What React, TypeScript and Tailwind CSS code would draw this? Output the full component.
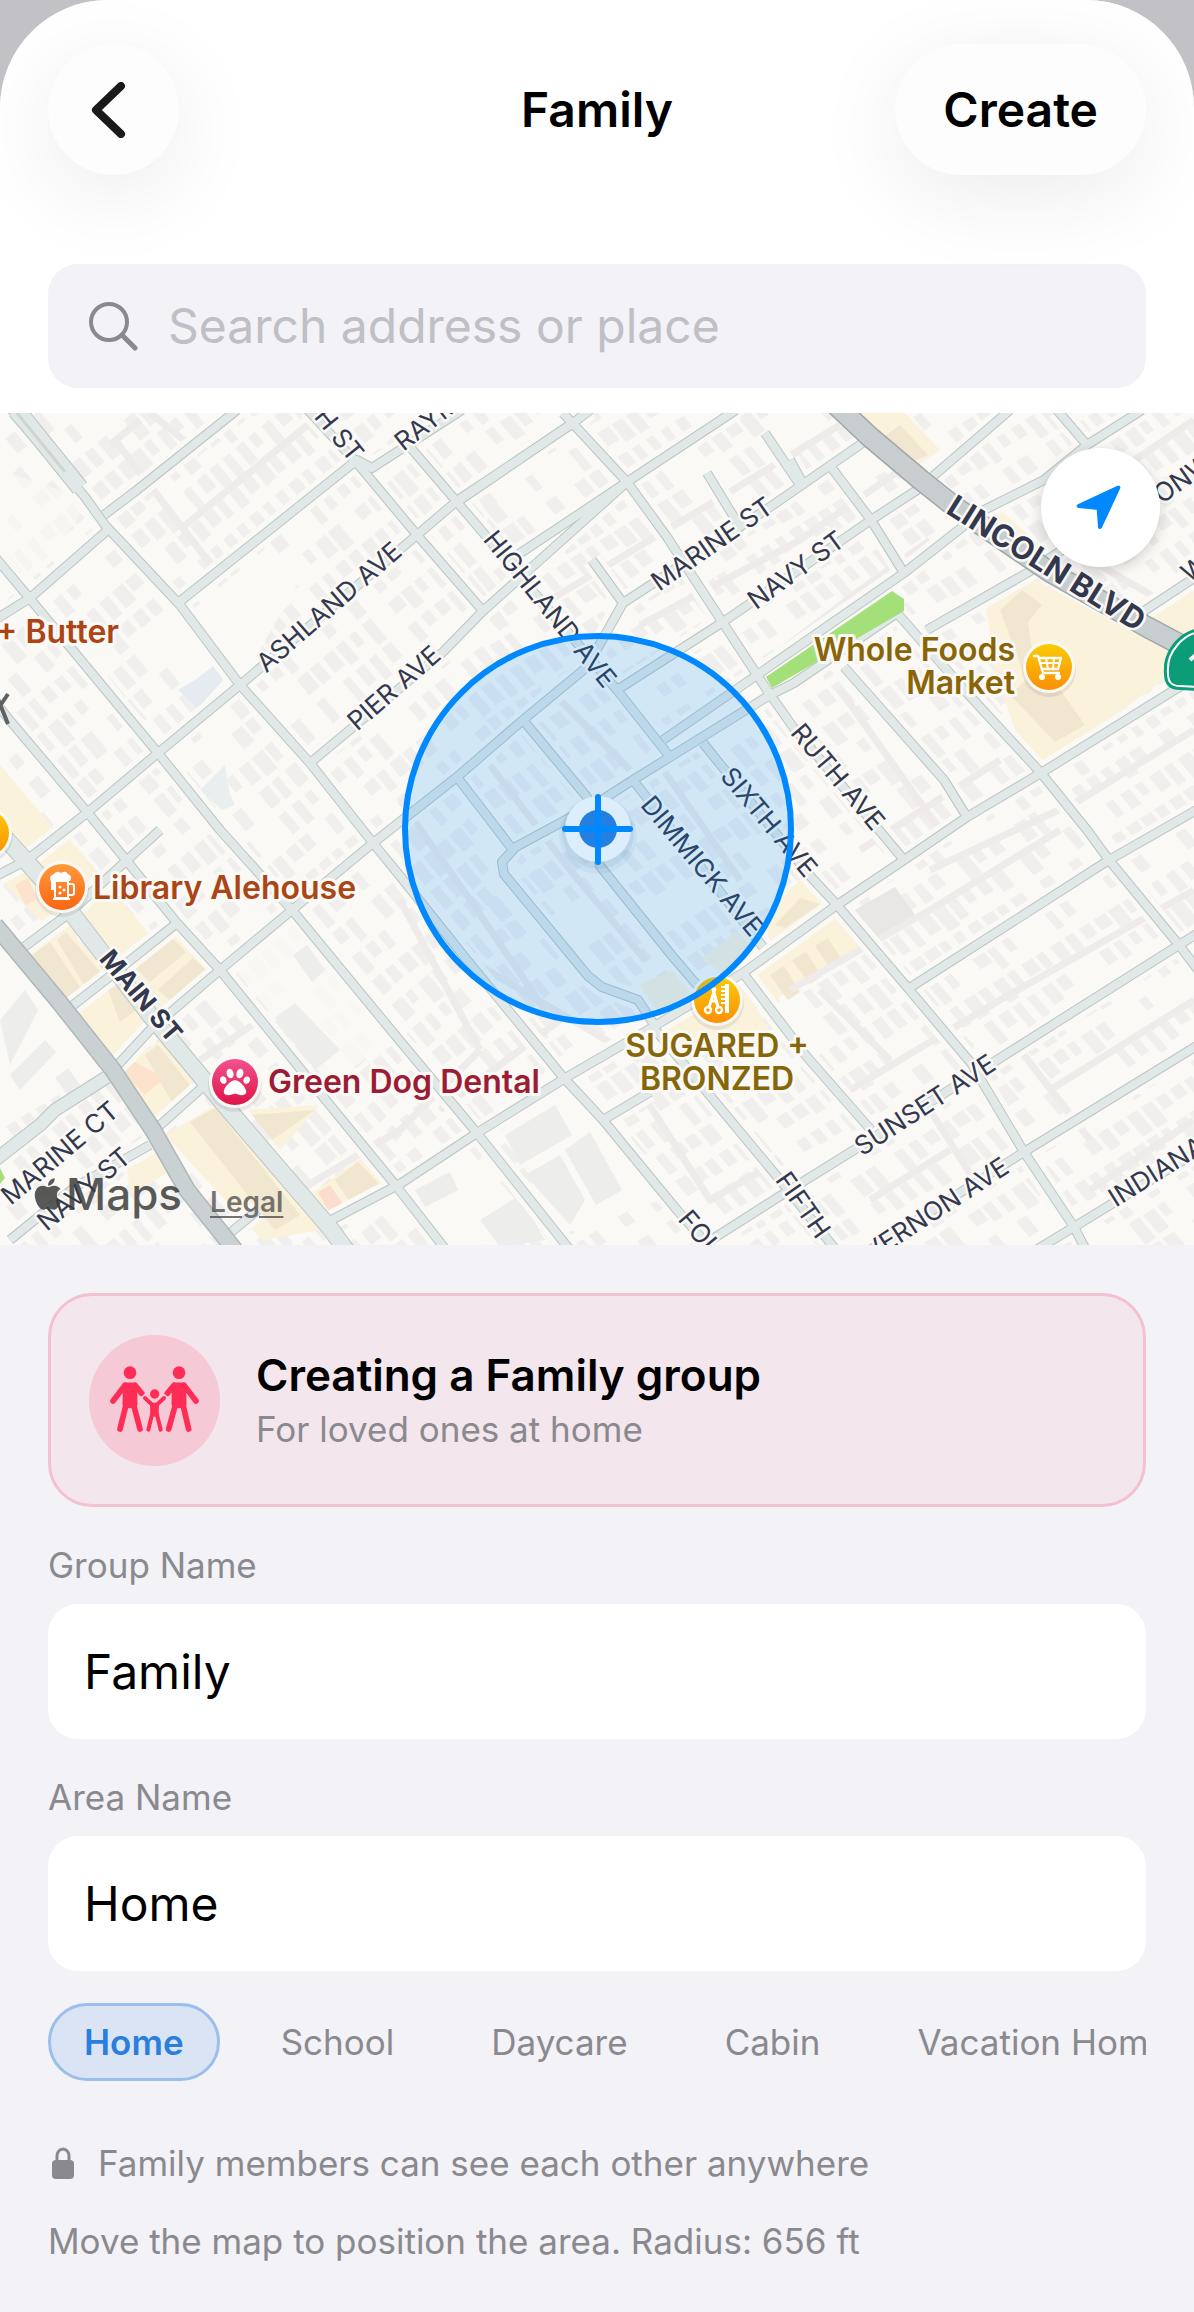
import { useState } from 'react';
import { FaApple, FaPaw } from 'react-icons/fa';

type Point = [number, number];

const chips = ['Home', 'School', 'Daycare', 'Cabin', 'Vacation Home'];

// Streets running north-west to south-east, then the cross streets
const streets = [
  'M13 413L85 497L105 525L180 605L240 685L310 763L373 843L400 876L467 960L563 1077L603 1120L677 1210L712 1250',
  'M-5 557L31 600L158 753L220 830L292 910L400 1041L477 1133L570 1250',
  'M0 708L7 717L88 813L177 923L220 970L320 1093L397 1187L446 1250',
  'M308 410L357 463L417 535L483 611',
  'M523 720L587 797L600 866L673 957L697 985L717 1005',
  'M653 1027L697 1080L780 1180L836 1250',
  'M633 780L763 947',
  'M743 973L807 1057L871 1130',
  'M703 743L811 877L837 905L907 987L971 1063L1024 1152L1074 1227L1086 1250',
  'M767 690L793 727L904 860',
  'M563 413L627 482L667 537L723 623L767 690',
  'M410 447L457 502L617 690L670 757',
  'M707 473L740 527',
  'M592 560L623 603',
  'M765 433L800 485',
  'M790 460L802 482',
  'M831 467L871 520L904 573',
  'M1057 410L1087 445',
  'M897 613L967 693L1041 773L1087 830L1109 860L1179 945L1198 970',
  'M844 667L944 780L967 817',
  'M457 777L513 850L502 862L504 874L588 976L602 987L638 1000L655 1026',
  'M-2 618L30 598L110 528',
  'M104 515L137 490L237 410',
  'M178 603L357 460L372 468L462 410',
  'M-2 875L27 860L88 812L158 753L240 685L417 535L458 500L573 423L590 410',
  'M20 950L67 915L160 830',
  'M310 763L443 652L483 611L627 482',
  'M457 502L573 423',
  'M510 560L627 482L736 410',
  'M220 970L292 910L373 843L457 777L523 720L587 667L623 603L770 507L864 442',
  'M67 1010L127 963L177 923',
  'M113 1070L150 1030L220 970',
  'M158 1127L233 1060',
  'M150 1145L75 1187L10 1240',
  'M230 1233L258 1210',
  'M617 690L723 622L871 520L917 490L1010 410',
  'M663 740L760 673L904 573L984 510L1044 480L1087 445L1142 410',
  'M510 850L597 803L633 780L670 757L770 695L794 683L897 613',
  'M927 630L1027 573L1100 525',
  'M1141 613L1200 574',
  'M320 1226L400 1184L477 1133L567 1077L653 1027L743 973L837 905L904 860L967 817L1041 773L1200 674',
  'M911 987L1109 860L1200 808',
  'M700 1247L780 1196L854 1150L997 1060L1179 945L1200 932',
  'M870 1250L1024 1152L1200 1044',
  'M1036 1250L1074 1227L1200 1150',
  'M603 1120L650 1092',
];

const alleys = [
  'M115 440L215 570',
  'M150 413L190 445',
  'M110 445L140 420',
  'M183 527L310 423',
  'M400 800L470 900L545 1010',
  'M490 765L570 870L645 960',
  'M560 700L660 800L720 890',
  'M550 600L700 510L840 425',
  'M640 625L800 540L900 470',
  'M690 720L860 590L930 540',
  'M660 765L740 880',
  'M470 960L640 1060',
  'M560 1020L440 1110',
  'M400 900L480 1050',
  'M840 690L940 830',
  'M1000 760L860 850',
  'M930 870L1080 800L1194 730',
  'M790 990L930 910L1060 830',
  'M820 990L890 1060',
  'M850 1090L1000 1000L1194 890',
  'M930 1110L980 1190',
  'M1020 1050L1090 1140',
  'M1050 1090L1194 1000',
  'M640 1090L710 1200L780 1160',
  'M870 1200L950 1150',
  'M1090 1190L1194 1120',
  'M200 1060L260 1020',
  'M300 1190L400 1130L480 1050',
  'M1090 560L1160 600',
  'M1120 470L1194 420',
];

const commercial = [
  'M0 765L55 830L20 850L0 835Z',
  'M28 830L62 830L120 905L60 940L0 880Z',
  'M75 845L150 935L120 960L80 910Z',
  'M26 955L65 925L110 975L66 1005Z',
  'M130 965L175 930L210 970L165 1010Z',
  'M73 1013L113 975L150 1022L113 1060Z',
  'M120 1070L160 1040L205 1090L162 1125Z',
  'M165 1135L215 1105L250 1140L320 1230L262 1240Z',
  'M248 1110L320 1105L280 1150Z',
  'M310 1195L365 1155L392 1187L335 1220Z',
  'M125 1150L150 1145L172 1170L130 1195Z',
  'M640 985L690 962L700 990L660 1020Z',
  'M700 960L745 925L765 950L730 975Z',
  'M655 1030L740 980L775 1040L720 1060Z',
  'M745 970L835 910L862 945L775 1000Z',
  'M765 915L800 880L828 900L770 945Z',
  'M856 413L905 413L940 450L918 465Z',
  'M985 600L1030 577L1185 660L1150 690L1040 768L1015 730L995 670Z',
  'M1000 510L1040 545L1010 545L990 525Z',
  'M1150 610L1194 590L1194 640L1150 620Z',
];

const commercialBuildings = [
  'M30 957L50 942L82 990L66 1000Z',
  'M57 940L66 932L100 972L84 985Z',
  'M135 968L172 938L186 952L150 982Z',
  'M158 990L193 958L206 970L172 1002Z',
  'M108 990L118 985L136 1010L120 1022Z',
  'M145 1055L158 1045L190 1085L172 1102Z',
  'M190 1122L215 1108L300 1215L275 1230Z',
  'M252 1115L315 1110L272 1140Z',
  'M335 1180L358 1162L380 1185L352 1205Z',
  'M1000 610L1022 590L1042 605L1028 622L1032 650L1085 725L1055 742L1010 695L1026 680Z',
  'M880 440L900 425L928 455L912 462Z',
  'M770 975L784 966L800 992L788 1000Z',
  'M792 960L806 952L822 976L810 984Z',
  'M815 946L828 938L842 960L830 968Z',
  'M775 925L800 898L820 904L785 928Z',
];

const streetLabels: { text: string; at: Point; turn: number; anchor?: 'start' | 'end' }[] = [
  { text: 'H ST', at: [358, 458], turn: 51, anchor: 'end' },
  { text: 'RAYMOND AVE', at: [398, 445], turn: -38, anchor: 'start' },
  { text: 'ASHLAND AVE', at: [329, 607], turn: -41 },
  { text: 'PIER AVE', at: [394, 688], turn: -41 },
  { text: 'HIGHLAND AVE', at: [550, 609], turn: 51 },
  { text: 'MARINE ST', at: [712, 544], turn: -35 },
  { text: 'NAVY ST', at: [796, 570], turn: -36 },
  { text: 'DIMMICK AVE', at: [702, 866], turn: 50 },
  { text: 'SIXTH AVE', at: [769, 822], turn: 50 },
  { text: 'RUTH AVE', at: [838, 777], turn: 50 },
  { text: 'SUNSET AVE', at: [925, 1105], turn: -33 },
  { text: 'VERNON AVE', at: [1006, 1164], turn: -33, anchor: 'end' },
  { text: 'INDIANA AVE', at: [1111, 1200], turn: -32, anchor: 'start' },
  { text: 'FIFTH', at: [803, 1205], turn: 55 },
  { text: 'FOURTH', at: [684, 1214], turn: 50, anchor: 'start' },
  { text: 'MARINE CT', at: [60, 1153], turn: -40 },
  { text: 'NAVY ST', at: [84, 1189], turn: -40 },
  { text: 'CONWAY AVE', at: [1141, 508], turn: -35, anchor: 'start' },
  { text: 'WARREN AVE', at: [1184, 576], turn: -35, anchor: 'start' },
];

const places: { lines: string[]; at: Point; anchor: 'start' | 'middle' | 'end'; color: string }[] = [
  { lines: ['+ Butter'], at: [119, 643], anchor: 'end', color: '#ab4516' },
  { lines: ['Library Alehouse'], at: [93, 899], anchor: 'start', color: '#ab4516' },
  { lines: ['Green Dog Dental'], at: [268, 1093], anchor: 'start', color: '#9c1c35' },
  { lines: ['Whole Foods', 'Market'], at: [1015, 661], anchor: 'end', color: '#8a6508' },
  { lines: ['SUGARED +', 'BRONZED'], at: [717, 1057], anchor: 'middle', color: '#86660a' },
];

// Small repeatable scatter of house footprints on a rotated grid
function footprints(turn: number, minX: number, maxX: number) {
  const shapes: string[] = [];
  const a = (turn * Math.PI) / 180;
  const b = (50 * Math.PI) / 180;
  let seed = 7;
  const next = () => {
    seed = (seed * 16807) % 2147483647;
    return seed / 2147483647;
  };
  for (let i = -70; i < 90; i++) {
    for (let j = -40; j < 60; j++) {
      const x = 600 + i * 17 * Math.cos(a) + j * 31 * Math.cos(b);
      const y = 830 + i * 17 * Math.sin(a) + j * 31 * Math.sin(b);
      const r = next();
      const w = 8 + next() * 6;
      const h = 13 + next() * 14;
      if (r < 0.2 || x < minX || x > maxX || y < 400 || y > 1250) continue;
      const ux = w * Math.cos(a);
      const uy = w * Math.sin(a);
      const vx = h * Math.cos(b);
      const vy = h * Math.sin(b);
      shapes.push(
        `M${x.toFixed(1)} ${y.toFixed(1)}l${ux.toFixed(1)} ${uy.toFixed(1)}l${vx.toFixed(1)} ${vy.toFixed(1)}l${(-ux).toFixed(1)} ${(-uy).toFixed(1)}z`,
      );
    }
  }
  return shapes.join('');
}

const houses = footprints(-40, 0, 480) + footprints(-32, 480, 1194);

function PlaceBadge({ x, y, fill, children }: { x: number; y: number; fill: string; children?: React.ReactNode }) {
  return (
    <g transform={`translate(${x} ${y})`}>
      <circle r="27" cy="3" fill="#000" opacity="0.07" />
      <circle r="26" fill="#fbf9f6" />
      <circle r="23" fill={fill} />
      {children}
    </g>
  );
}

function AreaMap() {
  return (
    <svg
      className="block h-[832px] w-full bg-[#faf9f5] font-['Inter',sans-serif]"
      viewBox="0 413 1194 832"
      preserveAspectRatio="xMidYMid slice"
      role="img"
      aria-label="Map of the area"
    >
      <defs>
        <linearGradient id="amber" x1="0" y1="0" x2="0" y2="1">
          <stop offset="0" stopColor="#fbcb05" />
          <stop offset="1" stopColor="#fb8f06" />
        </linearGradient>
        <linearGradient id="orange" x1="0" y1="0" x2="0" y2="1">
          <stop offset="0" stopColor="#ff9a3a" />
          <stop offset="1" stopColor="#fb6514" />
        </linearGradient>
        <linearGradient id="rose" x1="0" y1="0" x2="0" y2="1">
          <stop offset="0" stopColor="#f3528f" />
          <stop offset="1" stopColor="#dd1546" />
        </linearGradient>
      </defs>

      {/* Blocks */}
      <path d={houses} fill="#f0efed" />
      <path d="M178 690L195 680L215 665L223 680L198 708Z" fill="#e6ebf2" />
      <path d="M200 790L225 765L230 795L235 805L222 810Z" fill="#e9eeee" />
      <path d="M225 640L245 620L255 650L240 660Z" fill="#ececea" />
      <g fill="#faf9f5">
        <path d="M190 612L270 545L300 580L245 675Z" />
        <path d="M0 470L90 500L70 530L30 580L0 560Z" opacity="0.6" />
        <path d="M235 970L290 920L390 1040L330 1085Z" opacity="0.8" />
        <path d="M400 1195L470 1150L540 1240L450 1247Z" />
        <path d="M500 1115L570 1085L660 1200L560 1235Z" />
        <path d="M0 900L60 1010L100 1070L0 1130Z" />
      </g>
      <g fill="#ededec">
        <path d="M505 1135L555 1105L572 1135L520 1165Z" />
        <path d="M525 1175L560 1155L585 1200L570 1225Z" />
        <path d="M565 1150L590 1132L622 1190L596 1205Z" />
        <path d="M415 1190L450 1172L458 1190L425 1207Z" />
        <path d="M480 1220L520 1195L545 1240L500 1247Z" />
        <path d="M0 1020L25 990L38 1010L10 1065Z" />
        <path d="M10 1075L45 1040L56 1052L20 1090Z" />
        <path d="M275 1018L295 1003L340 1050L315 1070Z" />
        <path d="M293 955L307 945L325 970L312 982Z" />
        <path d="M55 1078L68 1068L80 1085L68 1095Z" />
        <path d="M855 910L895 887L915 915L875 940Z" fill="#e9e7e6" />
      </g>
      {commercial.map((d) => (
        <path key={d} d={d} fill="#fbf2dc" />
      ))}
      {commercialBuildings.map((d) => (
        <path key={d} d={d} fill="#f1e6cf" />
      ))}
      <path d="M122 1072L135 1062L165 1078L145 1095Z" fill="#fde3cd" />
      <path d="M15 885L28 878L38 900L25 905Z" fill="#fde3cd" />
      <path d="M318 1192L330 1185L345 1207L332 1217Z" fill="#fbdccf" />

      {/* Alleys and streets */}
      <g fill="none" strokeLinejoin="round">
        {alleys.map((d) => (
          <path key={d} d={d} stroke="#efebea" strokeWidth="7" />
        ))}
        <g stroke="#faf9f5" strokeWidth="20">
          {streets.map((d) => (
            <path key={d} d={d} />
          ))}
        </g>
        <g stroke="#bcc5c4" strokeWidth="10">
          {streets.map((d) => (
            <path key={d} d={d} />
          ))}
          <path d="M-5 827L27 862L73 915L150 1015L233 1115L330 1228L346 1250" strokeWidth="18" />
          <path d="M13 405L80 488" strokeWidth="18" />
          <path d="M-5 1160L40 1125L55 1110L107 1077" strokeWidth="14" />
        </g>
        <g stroke="#e1e8e8" strokeWidth="8">
          {streets.map((d) => (
            <path key={d} d={d} />
          ))}
          <path d="M-5 827L27 862L73 915L150 1015L233 1115L330 1228L346 1250" strokeWidth="16" />
          <path d="M13 405L80 488" strokeWidth="16" />
          <path d="M-5 1160L40 1125L55 1110L107 1077" strokeWidth="12" />
        </g>
        <path d="M17 413L65 472" stroke="#ccd6cf" strokeWidth="3" />
        <g>
          <path d="M-5 925L60 1003L113 1070L153 1130L187 1190L235 1250" stroke="#aeb8b9" strokeWidth="18" />
          <path d="M-5 925L60 1003L113 1070L153 1130L187 1190L235 1250" stroke="#cad1d2" strokeWidth="15" />
          <path d="M836 405L870 437L921 480L955 507L1050 572L1147 627L1200 655" stroke="#9fa8a9" strokeWidth="22" />
          <path d="M836 405L870 437L921 480L955 507L1050 572L1147 627L1200 655" stroke="#c8cecf" strokeWidth="19" />
        </g>
      </g>
      <path d="M766 677L892 591L904 599L904 611L772 688Z" fill="#a4e079" />
      <path d="M0 1168L5 1178L0 1184Z" fill="#a4e079" />
      <g fontSize="26" fill="#33384f" stroke="#faf9f5" strokeWidth="5" strokeLinejoin="round" paintOrder="stroke">
        {streetLabels.map((l) => (
          <text
            key={l.text + l.at[0]}
            transform={`translate(${l.at[0]} ${l.at[1]}) rotate(${l.turn})`}
            textAnchor={l.anchor ?? 'middle'}
            dy="9"
          >
            {l.text}
          </text>
        ))}
        <g fontWeight="700" textAnchor="middle">
          <text transform="translate(141 996) rotate(50)" dy="9">
            MAIN ST
          </text>
          <text transform="translate(1046 564) rotate(32)" dy="10" fontSize="31">
            LINCOLN BLVD
          </text>
        </g>
      </g>

      {/* State route shield */}
      <path d="M1200 628C1180 630 1164 650 1164 668C1163 684 1168 690 1180 690L1200 691Z" fill="#0a9d77" />
      <path d="M1200 632C1183 634 1168 652 1168 668C1167 682 1171 686 1180 686L1200 687" fill="none" stroke="#fff" strokeWidth="2" />
      <path d="M1190 660L1200 651" stroke="#fff" strokeWidth="4" />
      <path d="M-4 694L8 724M8 694L-4 712" stroke="#5d6264" strokeWidth="4" />

      {/* Places */}
      <PlaceBadge x={-14} y={833} fill="url(#amber)" />
      <PlaceBadge x={62} y={887} fill="url(#orange)">
        <g fill="none" stroke="#fff" strokeWidth="2">
          <rect x="-7" y="-6" width="13" height="17" />
          <path d="M7 -3h3q2 0 2 2v7q0 2 -2 2h-3M-9 12h17" />
        </g>
        <path d="M-11 -5q-3 -6 3 -8q3 -4 7 -1q5 -3 7 1q5 2 2 7H-8v9h-3z" fill="#fff" />
        <circle cx="-2" cy="0" r="1.5" fill="#fff" />
        <circle cx="2" cy="3" r="1.5" fill="#fff" />
        <circle cx="-2" cy="6" r="1.5" fill="#fff" />
      </PlaceBadge>
      <PlaceBadge x={235} y={1082} fill="url(#rose)">
        <FaPaw x="-15" y="-15" size={30} color="#fff" />
      </PlaceBadge>
      <PlaceBadge x={1049} y={667} fill="url(#amber)">
        <g fill="none" stroke="#fff" strokeWidth="2.4" strokeLinecap="round" strokeLinejoin="round">
          <path d="M-15 -11H-11L-6 6H10M-10 -9H12L9 2H-7" />
          <path d="M-9 -4H11M-3 -9L-1 2M5 -9L4 2" strokeWidth="2" />
        </g>
        <circle cx="-7" cy="10" r="3" fill="#fff" />
        <circle cx="9" cy="10" r="3" fill="#fff" />
      </PlaceBadge>
      <PlaceBadge x={717} y={1000} fill="url(#amber)">
        <g fill="none" stroke="#fff" strokeWidth="2.4" strokeLinecap="round">
          <circle cx="-9" cy="10" r="3" />
          <circle cx="2" cy="10" r="3" />
          <path d="M-8 7L-2 -11M1 7L-4 -11M-6 1h4" strokeWidth="3" />
        </g>
        <path d="M8 -16h4v29h-4zM4 -14h5v2h-5zM4 -10h5v2h-5zM4 -6h5v2h-5zM4 -2h5v2h-5zM4 2h5v2h-5z" fill="#fff" />
      </PlaceBadge>
      <g fontSize="32" fontWeight="600" stroke="#faf9f5" strokeWidth="6" strokeLinejoin="round" paintOrder="stroke">
        {places.map((p) => (
          <text key={p.lines[0]} x={p.at[0]} y={p.at[1]} textAnchor={p.anchor} fill={p.color}>
            {p.lines.map((line, i) => (
              <tspan key={line} x={p.at[0]} dy={i === 0 ? 0 : 33}>
                {line}
              </tspan>
            ))}
          </text>
        ))}
      </g>

      {/* Selected radius */}
      <circle cx="598" cy="829" r="193" fill="#0088ff" fillOpacity="0.16" stroke="#0088ff" strokeWidth="6" />
      <circle cx="598" cy="835" r="39" fill="#1b4f80" opacity="0.05" />
      <circle cx="598" cy="833" r="36" fill="#1b4f80" opacity="0.07" />
      <circle cx="598" cy="829" r="33" fill="#dcedfb" />
      <circle cx="598" cy="829" r="19" fill="#237fe0" />
      <path d="M598 797V862M565 829H630" stroke="#0088ff" strokeWidth="6" strokeLinecap="round" />
    </svg>
  );
}

function FamilyIcon() {
  return (
    <svg className="size-full" viewBox="178 165 393 393" aria-hidden="true">
      <g fill="#ff2d55" stroke="#ff2d55" strokeLinecap="round" strokeLinejoin="round">
        <g strokeWidth="17">
          <circle cx="301" cy="278" r="19" stroke="none" />
          <path d="M286 316L250 363M316 316L336 340M289 375L271 447M312 375L331 447" fill="none" />
          <path d="M288 316H314L315 374L301 376L287 374Z" />
        </g>
        <g strokeWidth="17">
          <circle cx="448" cy="278" r="19" stroke="none" />
          <path d="M463 316L499 363M433 316L413 340M460 375L477 447M437 375L417 447" fill="none" />
          <path d="M435 316H461L462 374L448 376L434 374Z" />
        </g>
      </g>
      {/* Child with raised hands, outlined to stand clear of the parents */}
      <path d="M346 354L364 374M403 354L385 374" fill="none" stroke="#f5c9d6" strokeWidth="21" strokeLinecap="round" />
      <g fill="#ff2d55" stroke="#ff2d55" strokeWidth="12" strokeLinecap="round" strokeLinejoin="round">
        <circle cx="375" cy="342" r="14" stroke="none" />
        <path d="M346 354L367 374M403 354L382 374M368 400L356 449M381 400L393 449" fill="none" />
        <path d="M367 374H382L381 404H368Z" />
      </g>
    </svg>
  );
}

export default function App() {
  const [groupName, setGroupName] = useState('Family');
  const [areaName, setAreaName] = useState('Home');

  return (
    <div className="min-h-screen bg-[#c2c1c6] font-['Inter',sans-serif] text-black">
      <main className="min-h-screen overflow-hidden rounded-t-[108px] bg-[#f2f2f7]">
        <div className="bg-white px-12 pt-11 pb-[25px]">
          {/* Header */}
          <header className="grid grid-cols-[1fr_auto_1fr] items-center">
            <button
              type="button"
              aria-label="Back"
              className="flex size-[131px] items-center justify-center rounded-full bg-[#fdfdfd] shadow-[0_20px_90px_rgba(0,0,0,0.08)]"
            >
              <svg className="mr-3 h-14 w-9" viewBox="0 0 36 56" fill="none" stroke="#1a1a1a" strokeWidth="8" strokeLinecap="round" strokeLinejoin="round">
                <path d="M31 4L6 28L31 52" />
              </svg>
            </button>
            <h1 className="text-[48px] font-semibold">Family</h1>
            <button
              type="button"
              className="h-[131px] justify-self-end rounded-full bg-[#fdfdfd] px-12 text-[48px] font-semibold shadow-[0_20px_90px_rgba(0,0,0,0.08)]"
            >
              Create
            </button>
          </header>

          {/* Search */}
          <label className="mt-[89px] flex h-[124px] items-center gap-[30px] rounded-[30px] bg-[#f2f2f7] px-10">
            <svg className="size-[50px] shrink-0" viewBox="0 0 50 50" fill="none" stroke="#8a8a8e" strokeWidth="4" strokeLinecap="round" aria-hidden="true">
              <circle cx="21" cy="21" r="18" />
              <path d="M34 34L47 47" strokeWidth="5" />
            </svg>
            <input
              type="search"
              aria-label="Search address or place"
              placeholder="Search address or place"
              className="min-w-0 flex-1 bg-transparent text-[48px] outline-none placeholder:text-[#bfbfc4]"
            />
          </label>
        </div>

        {/* Map */}
        <section className="relative">
          <AreaMap />
          <button
            type="button"
            aria-label="Current location"
            className="absolute top-[35px] right-[34px] size-[119px] rounded-full bg-white shadow-[0_4px_14px_rgba(0,0,0,0.16)]"
          >
            <svg className="size-full" viewBox="0 0 357 357" fill="#0088ff" stroke="#0088ff" strokeWidth="12" strokeLinejoin="round">
              <path d="M232 119L113 174L173 180L177 237Z" />
            </svg>
          </button>
          <div className="absolute bottom-[18px] left-[30px] flex items-baseline gap-7">
            <span className="flex items-center text-[44px] leading-[50px] font-medium text-[#3c3c3c]/85">
              <FaApple className="size-9" />
              Maps
            </span>
            <a href="#legal" className="text-[28px] leading-[50px] font-semibold text-[#3c3c3c]/70 underline underline-offset-4">
              Legal
            </a>
          </div>
        </section>

        <form className="px-12 pt-12" onSubmit={(e) => e.preventDefault()}>
          {/* Group type */}
          <div className="flex h-[214px] items-center gap-9 rounded-[44px] border-3 border-[#f5c0cf] bg-[#f3e6ed] px-[38px]">
            <div className="size-[131px] shrink-0 rounded-full bg-[#f5c9d6]">
              <FamilyIcon />
            </div>
            <div>
              <h2 className="text-[44px] leading-[58px] font-semibold">Creating a Family group</h2>
              <p className="text-[35px] leading-[50px] text-[#8a898e]">For loved ones at home</p>
            </div>
          </div>

          {/* Names */}
          <label htmlFor="group-name" className="mt-8 block text-[35px] leading-[52px] text-[#8a898e]">
            Group Name
          </label>
          <input
            id="group-name"
            value={groupName}
            onChange={(e) => setGroupName(e.target.value)}
            className="mt-[13px] block h-[135px] w-full rounded-[30px] bg-white px-9 text-[48px] outline-none"
          />
          <label htmlFor="area-name" className="mt-8 block text-[35px] leading-[52px] text-[#8a898e]">
            Area Name
          </label>
          <input
            id="area-name"
            value={areaName}
            onChange={(e) => setAreaName(e.target.value)}
            className="mt-[13px] block h-[135px] w-full rounded-[30px] bg-white px-9 text-[48px] outline-none"
          />

          {/* Suggestions */}
          <div className="mt-8 flex gap-[25px] overflow-hidden">
            {chips.map((chip) => (
              <button
                key={chip}
                type="button"
                onClick={() => setAreaName(chip)}
                className={`h-[78px] shrink-0 rounded-full border-3 px-[33px] text-[35px] ${
                  chip === areaName
                    ? 'border-[#9bbfec] bg-[#dbe4f4] font-semibold text-[#2b7fdc]'
                    : 'border-transparent text-[#8a898e]'
                }`}
              >
                {chip}
              </button>
            ))}
          </div>

          {/* Notes */}
          <p className="mt-14 flex items-center gap-6 text-[35px] leading-[52px] text-[#8a898e]">
            <svg className="ml-1 h-8 w-[22px]" viewBox="0 0 22 32" aria-hidden="true">
              <rect y="13" width="22" height="19" rx="4" fill="#8a898e" />
              <path d="M5 15V9a6 7 0 0 1 12 0V15" fill="none" stroke="#8a898e" strokeWidth="3" />
            </svg>
            Family members can see each other anywhere
          </p>
          <p className="mt-[26px] pb-10 text-[35px] leading-[52px] text-[#8a898e]">
            Move the map to position the area. Radius: 656 ft
          </p>
        </form>
      </main>
    </div>
  );
}
